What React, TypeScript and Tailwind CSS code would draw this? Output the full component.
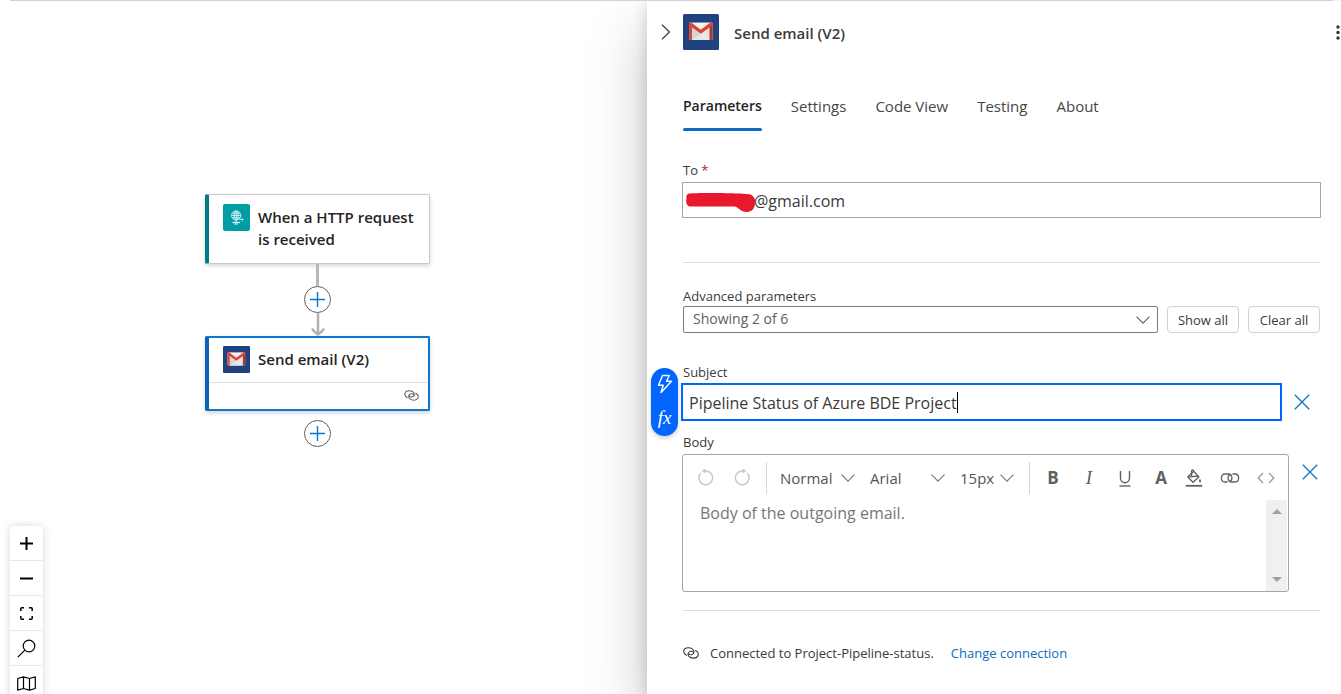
import React, { useState } from "react";

function GmailIcon({ className }: { className: string }) {
  return (
    <svg viewBox="0 0 36 36" className={className} aria-hidden="true">
      <rect width="36" height="36" rx="1.5" fill="#20427f" />
      <rect x="6" y="8.5" width="23.5" height="17.5" rx="1" fill="#e6e6e6" />
      <path d="M9 14 17.7 20.5 23 26H9Z" fill="#d4d4d4" />
      <path d="M9 26 17.7 19 26.500 26Z" fill="#f1f1f1" opacity=".6" />
      <path d="M9 9h17.500l-8.700 6.500Z" fill="#f2f2f2" />
      <path d="M6 10v15a1 1 0 0 0 1 1h2V12.500Z" fill="#d54b3d" />
      <path d="M29.500 10v15a1 1 0 0 1-1 1h-2V12.500Z" fill="#b63524" />
      <path d="M6 10.200c0-1.500 1.600-2.200 2.800-1.200l9 6.700 8.900-6.700c1.200-1 2.800-.3 2.800 1.200 0 .8-.3 1.300-.9 1.700L17.800 19.800 6.900 11.900c-.6-.4-.9-.9-.9-1.700Z" fill="#de4436" />
    </svg>
  );
}

function HttpIcon() {
  return (
    <svg viewBox="0 0 27 27" className="size-[27px] shrink-0" fill="none" stroke="#d8f3f4" strokeWidth="0.9" aria-hidden="true">
      <rect width="27" height="27" rx="2" fill="#009da5" stroke="none" />
      <circle cx="13.200" cy="11.500" r="4.600" />
      <ellipse cx="13.200" cy="11.500" rx="2" ry="4.600" />
      <path d="M8.600 11.500h9.200M9.300 9.200h7.800M9.300 13.800h7.800M13.200 7v11.500" />
      <path d="M9.500 18.500h7.500" strokeWidth="1.300" />
      <path d="M11.500 20h3.500" strokeWidth="1.200" />
      <path d="M16.500 15.500h3.500M18.800 14.200l1.400 1.300-1.400 1.300" />
    </svg>
  );
}

function ConnectionIcon({ className }: { className: string }) {
  return (
    <svg viewBox="0 0 16 12" className={className} fill="none" stroke="currentColor" strokeWidth="1.100" strokeLinecap="round" aria-hidden="true">
      <path d="M3.400 8.200C1.700 7.400.6 5.800.7 4.300.8 2.300 2.800.9 5.300.8c3-.1 5.700 1.600 5.700 3.900 0 1.700-1.600 3-3.300 3-1.200 0-2-.5-2.300-1.100" />
      <path d="M12.600 3.500c1.700.8 2.800 2.400 2.700 3.900-.1 2.100-2.100 3.600-4.600 3.700-3 .1-5.700-1.700-5.700-3.900 0-1.700 1.600-3 3.300-3 1.200 0 2 .5 2.300 1.100" />
    </svg>
  );
}

function ChevronDown({ className }: { className: string }) {
  return (
    <svg viewBox="0 0 14 8" className={className} fill="none" stroke="currentColor" strokeWidth="1.100" aria-hidden="true">
      <path d="M.5.700 7 7.200 13.500.700" />
    </svg>
  );
}

function AddButton() {
  return (
    <button aria-label="Add action" className="flex size-[27px] items-center justify-center rounded-full border border-[#605e5c] bg-white text-[#0078d4]">
      <svg viewBox="0 0 15 15" className="size-[15px]" stroke="currentColor" strokeWidth="1.400" aria-hidden="true">
        <path d="M7.500 0v15M0 7.500h15" />
      </svg>
    </button>
  );
}

function ClearButton({ label }: { label: string }) {
  return (
    <button aria-label={label} className="flex size-4 items-center justify-center text-[#1072c8]">
      <svg viewBox="0 0 16 16" className="size-4" stroke="currentColor" strokeWidth="1.300" aria-hidden="true">
        <path d="M.8.800l14.400 14.400M15.200.800.8 15.200" />
      </svg>
    </button>
  );
}

function WorkflowCanvas() {
  return (
    <main className="relative overflow-hidden">
      <div className="absolute top-[193px] left-[205px] flex w-[225px] flex-col items-center">
        <button className="flex h-[70px] w-full gap-2 rounded-[2px] border border-l-4 border-[#c8c8c8] border-l-[#007d84] bg-white pt-[9px] pr-3 pl-[14px] text-left text-[15px] leading-[22px] font-semibold text-[#252423] shadow-[0_2px_4px_rgba(0,0,0,0.16)]">
          <HttpIcon />
          <span className="pt-[2px]">When a HTTP request is received</span>
        </button>
        <div className="h-[22px] w-[3px] bg-[#b7b8bd]" />
        <AddButton />
        <svg viewBox="0 0 14 23" className="h-[23px] w-[14px]" fill="none" stroke="#b1b1b7" strokeWidth="2.500" aria-hidden="true">
          <path d="M7 0v21.500M1 15.500c1.500 3.200 3.800 4.300 6 6 2.200-1.700 4.500-2.800 6-6" />
        </svg>
        <div className="h-[75px] w-full rounded-[2px] border-2 border-l-4 border-[#0b78d4] border-l-[#0b63b5] bg-white shadow-[0_2px_4px_rgba(0,0,0,0.18)]">
          <button className="flex h-[45px] w-full items-center gap-2 border-b border-[#e1e1e1] pb-[2px] pl-[14px] text-left text-[15px] leading-[22px] font-semibold text-[#252423]">
            <GmailIcon className="size-[27px]" />
            Send email (V2)
          </button>
          <div className="flex h-[25px] items-center justify-end pr-[9px]">
            <ConnectionIcon className="h-[11px] w-[15px] text-[#605e5c]" />
          </div>
        </div>
        <div className="mt-[9px]">
          <AddButton />
        </div>
      </div>

      <div className="absolute -bottom-[7px] left-[10px] flex w-[33px] flex-col divide-y divide-[#e8e8e8] rounded-[4px] bg-white text-black shadow-[0_0_8px_rgba(0,0,0,0.16)]">
        <button aria-label="Zoom in" className="flex h-[35px] items-center justify-center">
          <svg viewBox="0 0 13 13" className="size-[13px]" stroke="currentColor" strokeWidth="2" aria-hidden="true"><path d="M6.500 0v13M0 6.500h13" /></svg>
        </button>
        <button aria-label="Zoom out" className="flex h-[35px] items-center justify-center">
          <svg viewBox="0 0 13 13" className="size-[13px]" stroke="currentColor" strokeWidth="2" aria-hidden="true"><path d="M0 6.500h13" /></svg>
        </button>
        <button aria-label="Zoom to fit" className="flex h-[35px] items-center justify-center">
          <svg viewBox="0 0 13 13" className="size-[13px]" fill="none" stroke="currentColor" strokeWidth="1.500" aria-hidden="true"><path d="M.8 4V1.800q0-1 1-1H4M9 .8h2.200q1 0 1 1V4M12.200 9v2.200q0 1-1 1H9M4 12.200H1.800q-1 0-1-1V9" /></svg>
        </button>
        <button aria-label="Search" className="flex h-[35px] items-center justify-center">
          <svg viewBox="0 0 19 19" className="size-[19px]" fill="none" stroke="currentColor" strokeWidth="1.200" aria-hidden="true"><circle cx="12" cy="7" r="5.800" /><path d="M7.900 11.100.8 18.200" /></svg>
        </button>
        <button aria-label="Toggle minimap" className="flex h-[35px] items-center justify-center">
          <svg viewBox="0 0 19 15" className="h-[15px] w-[19px]" fill="none" stroke="currentColor" strokeWidth="1.200" strokeLinejoin="round" aria-hidden="true"><path d="M.7 2.500 6.500.8l6 1.700L18.300.8v11.700l-5.800 1.700-6-1.700-5.800 1.700ZM6.500.8v11.700M12.500 2.500v11.700" /></svg>
        </button>
      </div>
    </main>
  );
}

const tabs = ["Parameters", "Settings", "Code View", "Testing", "About"];

function Tabs() {
  const [active, setActive] = useState("Parameters");
  return (
    <div role="tablist" className="mt-[41px] flex gap-[29px] text-[15px] leading-[22px] text-[#484644]">
      {tabs.map((tab) => (
        <button
          key={tab}
          role="tab"
          aria-selected={tab === active}
          onClick={() => setActive(tab)}
          className={
            tab === active
              ? "flex flex-col pt-1 text-sm leading-[22px] font-semibold text-[#242424] after:mt-[11px] after:h-[3px] after:w-full after:rounded-full after:bg-[#0f6cbd]"
              : "flex flex-col pt-1"
          }
        >
          {tab}
        </button>
      ))}
    </div>
  );
}

function ToolbarSelect({ label, value, className }: { label: string; value: string; className: string }) {
  return (
    <div className={className}>
      <select aria-label={label} className="col-start-1 row-start-1 w-full appearance-none bg-transparent text-[15px] leading-[22px] text-[#555] outline-none">
        <option>{value}</option>
      </select>
      <ChevronDown className="pointer-events-none col-start-1 row-start-1 h-2 w-[14px] justify-self-end text-[#777]" />
    </div>
  );
}

function ToolButton({ label, disabled, children }: { label: string; disabled?: boolean; children: React.ReactNode }) {
  return (
    <button
      aria-label={label}
      disabled={disabled}
      className="flex size-9 shrink-0 items-center justify-center text-[#606060] disabled:text-[#c8c8c8]"
    >
      {children}
    </button>
  );
}

function EditorToolbar() {
  return (
    <div className="flex h-[45px] items-center overflow-hidden pl-[5px]">
      <ToolButton label="Undo" disabled>
        <svg viewBox="0 0 18 18" className="size-[18px]" fill="none" stroke="currentColor" strokeWidth="1.500" aria-hidden="true"><path d="M3.600 4.200A6.900 6.900 0 1 0 9 1.900H7" /><path d="M8.500-.800v5.400L4.800 1.900Z" fill="currentColor" stroke="none" /></svg>
      </ToolButton>
      <ToolButton label="Redo" disabled>
        <svg viewBox="0 0 18 18" className="size-[18px]" fill="none" stroke="currentColor" strokeWidth="1.500" aria-hidden="true"><path d="M14.400 4.200A6.900 6.900 0 1 1 9 1.900h2" /><path d="M9.500-.800v5.400l3.700-2.700Z" fill="currentColor" stroke="none" /></svg>
      </ToolButton>
      <div className="ml-[6px] h-8 w-px bg-[#d6d6d6]" />
      <ToolbarSelect label="Block format" value="Normal" className="ml-[13px] grid w-[75px] items-center" />
      <ToolbarSelect label="Font" value="Arial" className="ml-[15px] grid w-[75px] items-center" />
      <ToolbarSelect label="Font size" value="15px" className="ml-[15px] grid w-[54px] items-center" />
      <div className="ml-[15px] h-8 w-px bg-[#d6d6d6]" />
      <div className="ml-[5px] flex">
        <ToolButton label="Bold"><span className="text-[17px] font-bold">B</span></ToolButton>
        <ToolButton label="Italic"><span className="font-['Liberation_Serif',serif] text-[19px] italic">I</span></ToolButton>
        <ToolButton label="Underline">
          <svg viewBox="0 0 14 18" className="h-[18px] w-[14px]" fill="none" stroke="currentColor" strokeWidth="1.400" aria-hidden="true"><path d="M2.500 2v7.200c0 6 9 6 9 0V2" /><path d="M1.500 17h11" /></svg>
        </ToolButton>
        <ToolButton label="Text color"><span className="text-[17px] font-bold">A</span></ToolButton>
      </div>
      <div className="-ml-[3px] flex">
        <ToolButton label="Highlight color">
          <svg viewBox="0 0 18 18" className="size-[18px]" fill="none" stroke="currentColor" strokeWidth="1.300" aria-hidden="true">
            <path d="M8.700 2.200 13.800 8 8 13.300 2.800 8Z" /><path d="M3 8.200 13.500 7" /><path d="M6.600 7V2.200C6.600.6 8.700.6 8.700 2.200" />
            <path d="M15 9.800c1.500 2.200 1.400 3.600 0 3.600s-1.500-1.400 0-3.600Z" fill="currentColor" stroke="none" />
            <path d="M.8 16.800h16.400" strokeWidth="1.800" />
          </svg>
        </ToolButton>
        <ToolButton label="Insert link">
          <svg viewBox="0 0 20 12" className="h-3 w-5" fill="none" stroke="currentColor" strokeWidth="1.300" aria-hidden="true">
            <path d="M7.500 10H5C.2 10 .2 2 5 2h3.500c4 0 4.500 6 1.500 7.500" />
            <path d="M12.500 2H15c4.800 0 4.800 8 0 8h-3.500C7.500 10 7 4 10 2.500" />
          </svg>
        </ToolButton>
        <ToolButton label="Code view">
          <svg viewBox="0 0 18 12" className="h-3 w-[18px]" fill="none" stroke="#999" strokeWidth="1.300" aria-hidden="true"><path d="M6 1 1.200 6 6 11M12 1l4.800 5L12 11" /></svg>
        </ToolButton>
      </div>
    </div>
  );
}

function DetailsPanel() {
  const [subject, setSubject] = useState("Pipeline Status of Azure BDE Project");
  return (
    <aside className="relative z-10 bg-white pr-[21px] pl-9 text-[13px] leading-[18px] text-[#3b3a39] shadow-[0_26px_58px_rgba(0,0,0,0.22),0_5px_14px_rgba(0,0,0,0.18)]">
      <header className="-mr-[21px] -ml-6 flex items-center pt-[13px]">
        <button aria-label="Collapse panel" className="flex h-9 w-6 items-center pl-[2px]">
          <svg viewBox="0 0 10 16" className="h-4 w-[10px]" fill="none" stroke="#424242" strokeWidth="1.300" aria-hidden="true"><path d="M1 .8 8.500 8 1 15.200" /></svg>
        </button>
        <GmailIcon className="size-9" />
        <h1 className="ml-[15px] flex-1 pt-[2px] text-[15px] leading-[22px] font-semibold">Send email (V2)</h1>
        <button aria-label="More commands" className="flex h-9 w-[5px] items-center">
          <svg viewBox="0 0 5 16" className="h-4 w-[5px]" fill="#333" aria-hidden="true"><circle cx="2" cy="3" r="1.700" /><circle cx="2" cy="8.500" r="1.700" /><circle cx="2" cy="14" r="1.700" /></svg>
        </button>
      </header>

      <Tabs />

      <label htmlFor="to" className="mt-[30px] block">To <span className="text-[#a4262c]">*</span></label>
      <div className="-mx-px mt-[3px] flex h-9 items-center border border-[#a6a6a6] pt-px pl-[3px]">
        <svg viewBox="0 0 70 22" className="h-[22px] w-[70px] shrink-0" aria-label="Redacted address">
          <path d="M3 3.500C1 4-.2 6 .5 9c-1 3 0 6.500 3 7.500h45c3 0 6 5.500 12.500 5.500 5 0 8-4 8-9 1-3-1-7-4.500-8.500-5-1.500-52-2-61.500-1Z" fill="#e8192c" />
        </svg>
        <input id="to" defaultValue="@gmail.com" className="-ml-[2px] min-w-0 flex-1 text-base leading-[22px] outline-none" />
      </div>

      <hr className="mt-11 border-[#dedede]" />

      <label htmlFor="advanced" className="mt-6 block">Advanced parameters</label>
      <div className="mt-px flex gap-[9px]">
        <div className="grid min-w-0 flex-1 items-center">
          <select id="advanced" className="col-start-1 row-start-1 h-[27px] w-full appearance-none rounded-[2px] border border-[#7a7a7a] bg-white pb-[2px] pl-[9px] text-sm text-[#616161] outline-none">
            <option>Showing 2 of 6</option>
          </select>
          <ChevronDown className="pointer-events-none col-start-1 row-start-1 mr-2 h-2 w-[14px] justify-self-end text-[#616161]" />
        </div>
        <button className="h-[27px] w-[72px] rounded-[4px] border border-[#d1d1d1] bg-white">Show all</button>
        <button className="h-[27px] w-[72px] rounded-[4px] border border-[#d1d1d1] bg-white">Clear all</button>
      </div>

      <label htmlFor="subject" className="mt-[30px] block">Subject</label>
      <div className="relative mt-[2px] -ml-[2px] flex items-center gap-3">
        <div className="absolute -top-[15px] -left-[30px] flex h-[68px] w-[27px] flex-col items-center justify-around rounded-full bg-[#0066ff] text-white shadow-[0_2px_4px_rgba(0,0,0,0.2)]">
          <button aria-label="Insert dynamic content" className="flex">
            <svg viewBox="0 0 16 20" className="h-5 w-4" fill="none" stroke="currentColor" strokeWidth="1.400" strokeLinejoin="round" aria-hidden="true"><path d="M5.500 1.500h6.800L9.500 7.300h5L4 18.500l2.200-7.300H1.500Z" /></svg>
          </button>
          <button aria-label="Insert expression" className="font-['Liberation_Serif',serif] text-[19px] leading-6 italic">fx</button>
        </div>
        <div className="flex h-[38px] min-w-0 flex-1 items-center border-2 border-[#0066ff] pt-px pl-[6px]">
          <input id="subject" value={subject} onChange={(e) => setSubject(e.target.value)} className="field-sizing-content min-w-0 text-base leading-[22px] outline-none" />
          <span className="h-[21px] w-px bg-black" />
        </div>
        <div className="mr-[10px]"><ClearButton label="Clear subject" /></div>
      </div>

      <label htmlFor="body" className="mt-3 block">Body</label>
      <div className="mt-[3px] -ml-px flex gap-[13px]">
        <div className="h-[138px] min-w-0 flex-1 rounded-[3px] border border-[#a6a6a6] bg-white">
          <EditorToolbar />
          <div className="flex h-[91px] pr-px">
            <textarea id="body" placeholder="Body of the outgoing email." className="min-w-0 flex-1 resize-none overflow-hidden pt-[2px] pl-[17px] text-base leading-[22px] outline-none placeholder:text-[#767676]" />
            <div className="flex w-[21px] flex-col items-center justify-between bg-[#f0f0f0] py-[9px] text-[#a0a0a0]">
              <svg viewBox="0 0 10 5" className="h-[5px] w-[10px]" fill="currentColor" aria-hidden="true"><path d="M0 5 5 0l5 5Z" /></svg>
              <svg viewBox="0 0 10 5" className="h-[5px] w-[10px]" fill="currentColor" aria-hidden="true"><path d="M0 0l5 5 5-5Z" /></svg>
            </div>
          </div>
        </div>
        <div className="mt-[10px] mr-[2px]"><ClearButton label="Clear body" /></div>
      </div>

      <hr className="mt-[18px] border-[#dedede]" />

      <footer className="mt-[33px] flex items-center">
        <ConnectionIcon className="h-3 w-4" />
        <span className="ml-[11px]">Connected to Project-Pipeline-status.</span>
        <a href="#connection" className="ml-[17px] text-[#0f6cbd]">Change connection</a>
      </footer>
    </aside>
  );
}

export default function App() {
  return (
    <div className="flex h-screen flex-col overflow-hidden bg-white font-['Open_Sans','Noto_Sans',sans-serif]">
      <div className="relative z-20 mr-2 ml-[10px] h-px shrink-0 bg-[#d2d2d2]" />
      <div className="grid min-h-0 flex-1 grid-cols-[minmax(0,647fr)_minmax(0,694fr)]">
        <WorkflowCanvas />
        <DetailsPanel />
      </div>
    </div>
  );
}
